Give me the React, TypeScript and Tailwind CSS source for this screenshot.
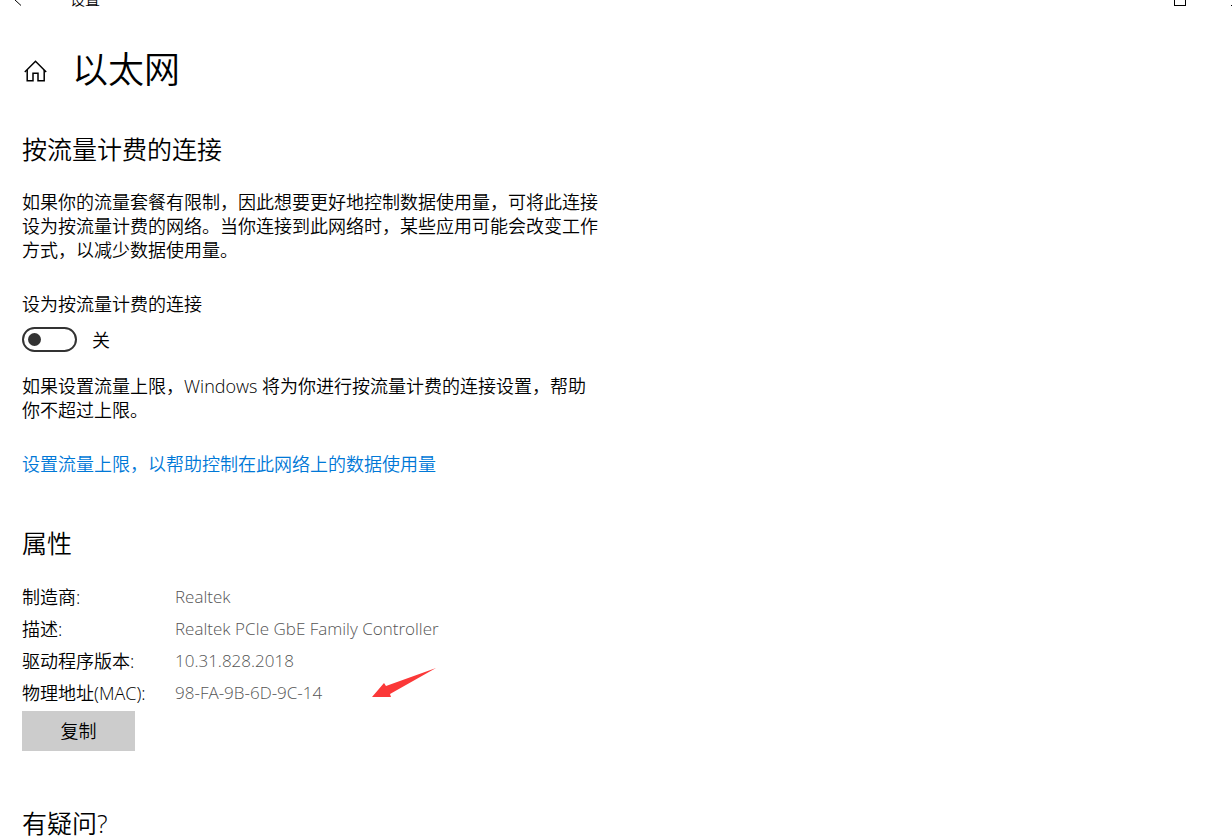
import React, { useState } from 'react';

interface PropertyItem {
  label: string;
  value: string;
  marked?: boolean;
}

const properties: PropertyItem[] = [
  { label: '制造商:', value: 'Realtek' },
  { label: '描述:', value: 'Realtek PCIe GbE Family Controller' },
  { label: '驱动程序版本:', value: '10.31.828.2018' },
  { label: '物理地址(MAC):', value: '98-FA-9B-6D-9C-14', marked: true },
];

const TitleBar: React.FC = () => (
  <div className="flex h-2 items-end justify-between overflow-hidden">
    <div className="flex items-end pl-[14px]">
      <button aria-label="返回" className="mb-[2px]">
        <svg width="8" height="12" viewBox="0 0 8 12" fill="none" stroke="#000">
          <path d="M7 0.5 L1 6 L7 11.7" transform="scale(1 -1) translate(0 -12)" />
        </svg>
      </button>
      <span className="ml-12 text-[15px] leading-[17px]">设置</span>
    </div>
    <div className="flex items-end">
      <button aria-label="最大化" className="mb-[2px] h-3 w-3 border border-black" />
      <button aria-label="关闭" className="mb-[2px] ml-[45px] h-px w-px bg-black" />
    </div>
  </div>
);

const HomeIcon: React.FC = () => (
  <svg width="24" height="22" viewBox="0 0 24 22" fill="none" stroke="#000" strokeWidth="1.5">
    <path d="M0.8 12 L11.5 1.3 L22.2 12" />
    <path d="M3.2 10 V20.7 H9 V13.2 H14 V20.7 H20.2 V10" />
  </svg>
);

const Arrow: React.FC = () => (
  <svg
    className="absolute bottom-3 left-[197px]"
    width="65"
    height="30"
    viewBox="0 0 65 30"
    fill="#fb3838"
    aria-hidden="true"
  >
    <path d="M0 30 L12 16 L14 19 L64 1 L18 27 L19 30 Z" />
  </svg>
);

const SectionTitle: React.FC<{ children: React.ReactNode }> = ({ children }) => (
  <h2 className="text-[25px] leading-8">{children}</h2>
);

const App: React.FC = () => {
  const [metered, setMetered] = useState(false);

  return (
    <div className="min-h-screen bg-white font-['Open_Sans','Noto_Sans_CJK_SC',sans-serif] text-lg leading-6 font-[350] text-black">
      <TitleBar />

      <main className="px-[22px]">
        <header className="flex items-center gap-6 pt-[38px] pl-[2px]">
          <a href="#home" aria-label="主页" className="pt-[2px]">
            <HomeIcon />
          </a>
          <h1 className="text-4xl leading-12">以太网</h1>
        </header>

        <section className="max-w-[576px] pt-[39px]">
          <SectionTitle>按流量计费的连接</SectionTitle>
          <p className="mt-[25px]">
            如果你的流量套餐有限制，因此想要更好地控制数据使用量，可将此连接设为按流量计费的网络。当你连接到此网络时，某些应用可能会改变工作方式，以减少数据使用量。
          </p>

          <label htmlFor="metered" className="mt-[30px] block">
            设为按流量计费的连接
          </label>
          <div className="mt-[11px] flex items-center gap-[15px]">
            <input
              id="metered"
              type="checkbox"
              role="switch"
              checked={metered}
              onChange={(e) => setMetered(e.target.checked)}
              className="flex h-[25px] w-[55px] appearance-none items-center rounded-full border-2 border-[#333] px-1 before:h-[13px] before:w-[13px] before:rounded-full before:bg-[#333] checked:justify-end"
            />
            <span>{metered ? '开' : '关'}</span>
          </div>

          <p className="mt-[22px]">
            如果设置流量上限，Windows 将为你进行按流量计费的连接设置，帮助你不超过上限。
          </p>
          <a href="#limit" className="mt-[30px] block text-[#0078d7]">
            设置流量上限，以帮助控制在此网络上的数据使用量
          </a>
        </section>

        <section className="pt-[51px]">
          <SectionTitle>属性</SectionTitle>
          <dl className="mt-[22px] leading-8">
            {properties.map((item) => (
              <div key={item.label} className="flex">
                <dt className="w-[153px] shrink-0">{item.label}</dt>
                <dd className="relative text-[17px] text-[#555]">
                  {item.value}
                  {item.marked && <Arrow />}
                </dd>
              </div>
            ))}
          </dl>
          <button className="mt-[2px] h-10 w-[113px] bg-[#ccc]">复制</button>
        </section>

        <section className="pt-14">
          <SectionTitle>有疑问?</SectionTitle>
        </section>
      </main>
    </div>
  );
};

export default App;
